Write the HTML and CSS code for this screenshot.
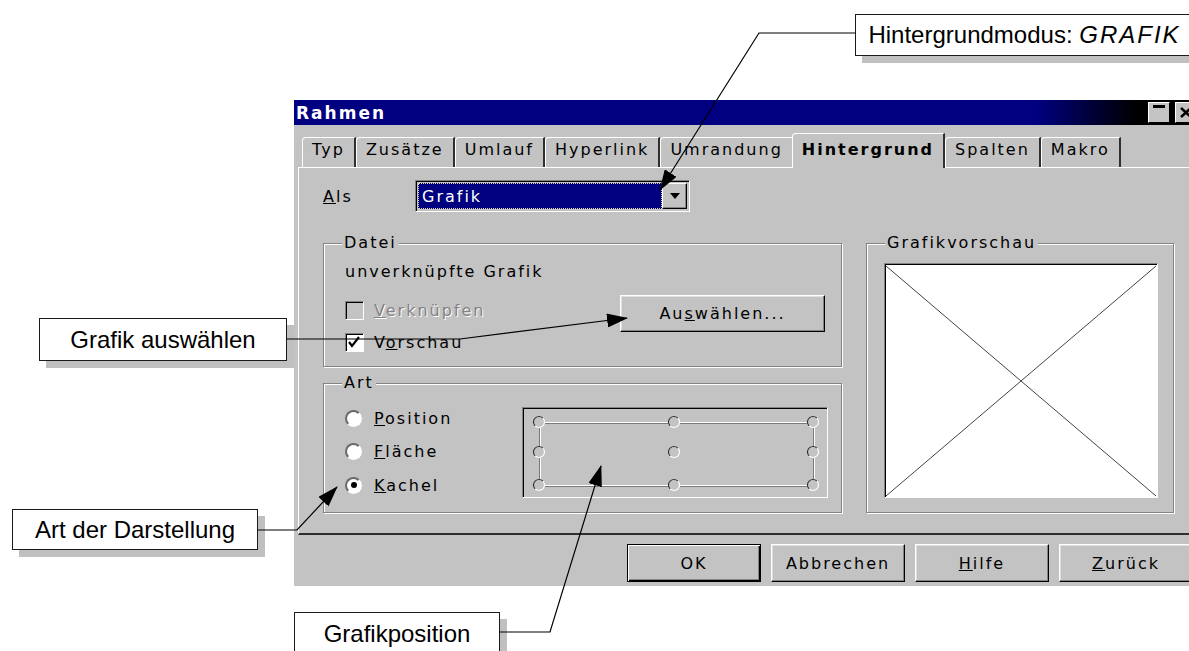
FILE: index.html
```html
<!DOCTYPE html>
<html lang="de">
<head>
    <meta charset="UTF-8">
    <meta name="viewport" content="width=device-width, initial-scale=1.0">
    <title>Rahmen - Hintergrund</title>
    <link rel="stylesheet" href="styles.css">
</head>
<body>
    <div class="dialog">
        <div class="titlebar">
            <span class="title">Rahmen</span>
            <div class="wm-buttons">
                <span class="wm-btn wm-min"></span>
                <span class="wm-btn wm-close">
                    <svg width="20" height="19" viewBox="0 0 20 19"><path d="M5 5 L15 14 M15 5 L5 14" stroke="#000" stroke-width="2.5"/></svg>
                </span>
            </div>
        </div>

        <div class="tabs">
            <div class="tab">Typ</div>
            <div class="tab">Zusätze</div>
            <div class="tab">Umlauf</div>
            <div class="tab">Hyperlink</div>
            <div class="tab before-active">Umrandung</div>
            <div class="tab active">Hintergrund</div>
            <div class="tab">Spalten</div>
            <div class="tab">Makro</div>
        </div>

        <div class="pane">
            <div class="als-row">
                <span class="als-label"><u>A</u>ls</span>
                <div class="combo">
                    <div class="combo-field">Grafik</div>
                    <div class="combo-btn"><span class="down"></span></div>
                </div>
            </div>

            <div class="groups">
                <div class="left-col">
                    <div class="group datei">
                        <span class="legend">Datei</span>
                        <div class="file-name">unverknüpfte Grafik</div>
                        <div class="file-row">
                            <div class="checks">
                                <div class="check disabled"><span class="box"></span><span><u>V</u>erknüpfen</span></div>
                                <div class="check"><span class="box"><svg width="17" height="17" viewBox="0 0 17 17"><polyline points="3,8 6,12 13,3" fill="none" stroke="#000" stroke-width="2.2"/></svg></span><span>V<u>o</u>rschau</span></div>
                            </div>
                            <button class="btn btn-select">Au<u>s</u>wählen...</button>
                        </div>
                    </div>

                    <div class="group art">
                        <span class="legend">Art</span>
                        <div class="radios">
                            <div class="radio-row"><span class="radio"></span><span><u>P</u>osition</span></div>
                            <div class="radio-row"><span class="radio"></span><span><u>F</u>läche</span></div>
                            <div class="radio-row"><span class="radio checked"></span><span><u>K</u>achel</span></div>
                        </div>
                        <div class="pos-widget">
                            <svg width="304" height="89" viewBox="0 0 304 89">
                                <defs>
                                    <g id="handle">
                                        <circle r="5.5" fill="#c3c3c3" stroke="#fff" stroke-width="1.2"/>
                                        <path d="M3.9,-3.9 A5.5,5.5 0 0 0 -3.9,3.9" fill="none" stroke="#2a2a2a" stroke-width="1.2"/>
                                    </g>
                                </defs>
                                <g stroke-width="1">
                                    <line x1="22" y1="14.5" x2="145" y2="14.5" stroke="#fff"/>
                                    <line x1="22" y1="15.5" x2="145" y2="15.5" stroke="#7a7a7a"/>
                                    <line x1="157" y1="14.5" x2="284" y2="14.5" stroke="#fff"/>
                                    <line x1="157" y1="15.5" x2="284" y2="15.5" stroke="#7a7a7a"/>
                                    <line x1="22" y1="77.5" x2="145" y2="77.5" stroke="#fff"/>
                                    <line x1="22" y1="78.5" x2="145" y2="78.5" stroke="#7a7a7a"/>
                                    <line x1="157" y1="77.5" x2="284" y2="77.5" stroke="#fff"/>
                                    <line x1="157" y1="78.5" x2="284" y2="78.5" stroke="#7a7a7a"/>
                                    <line x1="16.5" y1="20" x2="16.5" y2="38" stroke="#7a7a7a"/>
                                    <line x1="17.5" y1="20" x2="17.5" y2="38" stroke="#fff"/>
                                    <line x1="16.5" y1="50" x2="16.5" y2="71" stroke="#7a7a7a"/>
                                    <line x1="17.5" y1="50" x2="17.5" y2="71" stroke="#fff"/>
                                    <line x1="290.5" y1="20" x2="290.5" y2="38" stroke="#7a7a7a"/>
                                    <line x1="291.5" y1="20" x2="291.5" y2="38" stroke="#fff"/>
                                    <line x1="290.5" y1="50" x2="290.5" y2="71" stroke="#7a7a7a"/>
                                    <line x1="291.5" y1="50" x2="291.5" y2="71" stroke="#fff"/>
                                </g>
                                <use href="#handle" x="16" y="14"/>
                                <use href="#handle" x="151" y="14"/>
                                <use href="#handle" x="290" y="14"/>
                                <use href="#handle" x="16" y="44"/>
                                <use href="#handle" x="151" y="44"/>
                                <use href="#handle" x="290" y="44"/>
                                <use href="#handle" x="16" y="77"/>
                                <use href="#handle" x="151" y="77"/>
                                <use href="#handle" x="290" y="77"/>
                            </svg>
                        </div>
                    </div>
                </div>

                <div class="group vorschau">
                    <span class="legend">Grafikvorschau</span>
                    <div class="preview">
                        <svg width="272" height="233" viewBox="0 0 272 233">
                            <line x1="1" y1="2" x2="271" y2="232" stroke="#444"/>
                            <line x1="271" y1="2" x2="1" y2="232" stroke="#444"/>
                        </svg>
                    </div>
                </div>
            </div>
        </div>

        <div class="buttons">
            <button class="btn default">OK</button>
            <button class="btn">Abbrechen</button>
            <button class="btn"><u>H</u>ilfe</button>
            <button class="btn"><u>Z</u>urück</button>
        </div>
    </div>

    <!-- callouts -->
    <div class="callout callout-modus">Hintergrundmodus:&nbsp;<i>GRAFIK</i></div>
    <div class="callout callout-select">Grafik auswählen</div>
    <div class="callout callout-art">Art der Darstellung</div>
    <div class="callout callout-pos">Grafikposition</div>

    <svg class="arrows" width="1189" height="651" viewBox="0 0 1189 651">
        <defs>
            <marker id="head" markerWidth="21" markerHeight="14" refX="20" refY="7" orient="auto" markerUnits="userSpaceOnUse">
                <path d="M0,0 L21,7 L0,14 Z" fill="#000"/>
            </marker>
        </defs>
        <g fill="none" stroke="#000" stroke-width="1.2">
            <polyline points="855,33 759,33 660,190" marker-end="url(#head)"/>
            <polyline points="287,339 460,339 627,318" marker-end="url(#head)"/>
            <polyline points="258,530 297,530 337,487" marker-end="url(#head)"/>
            <polyline points="500,632 550,632 601,466" marker-end="url(#head)"/>
        </g>
    </svg>
</body>
</html>
```

FILE: styles.css
```css
* {
    box-sizing: border-box;
}
html, body {
    margin: 0;
    padding: 0;
}
body {
    position: relative;
    width: 1189px;
    height: 651px;
    overflow: hidden;
    background: #fff;
    font-family: "DejaVu Sans", sans-serif;
}

/* dialog window */
.dialog {
    width: 905px;
    height: 486px;
    margin: 100px 0 0 294px;
    display: flex;
    flex-direction: column;
    background: #c3c3c3;
    color: #000;
    font-size: 16px;
    letter-spacing: 2px;
}
.titlebar {
    height: 25px;
    flex: none;
    display: flex;
    align-items: center;
    justify-content: space-between;
    padding: 0 2px;
    background: linear-gradient(to right, #000080 0%, #000080 82%, #000 93%);
}
.title {
    color: #fff;
    font-weight: bold;
    font-size: 17px;
}
.wm-buttons {
    display: flex;
    gap: 5px;
}
.wm-btn {
    position: relative;
    width: 22px;
    height: 21px;
    background: #c3c3c3;
    border: 1px solid;
    border-color: #fff #000 #000 #fff;
}
.wm-min::before {
    content: "";
    position: absolute;
    left: 4px;
    right: 4px;
    top: 2px;
    height: 3px;
    background: #000;
}
.wm-close svg {
    display: block;
}

/* tabs */
.tabs {
    height: 42px;
    flex: none;
    display: flex;
    align-items: flex-end;
    padding-left: 8px;
}
.tab {
    height: 30px;
    padding: 0 9px 5px;
    line-height: 24px;
    white-space: nowrap;
    border-top: 1px solid #fff;
    border-left: 1px solid #fff;
    border-right: 2px solid #2e2e2e;
    border-top-left-radius: 4px;
}
.tab.before-active {
    border-right: none;
}
.tab.active {
    position: relative;
    z-index: 1;
    height: 35px;
    margin-bottom: -1px;
    padding-top: 4px;
    padding-bottom: 6px;
    font-weight: bold;
    background: #c3c3c3;
}
.pane {
    height: 368px;
    flex: none;
    margin-left: 4px;
    padding: 12px 0 0 24px;
    border-top: 1px solid #fff;
    border-left: 1px solid #fff;
    border-bottom: 2px solid #2e2e2e;
}

/* "Als" combo */
.als-row {
    display: flex;
    align-items: center;
    height: 32px;
}
.als-label {
    width: 92px;
}
.combo {
    width: 275px;
    height: 32px;
    display: flex;
    padding: 2px;
    border: 1px solid;
    border-color: #848284 #fff #fff #848284;
    box-shadow: inset 1px 1px 0 #000;
}
.combo-field {
    flex: 1;
    display: flex;
    align-items: center;
    padding-left: 3px;
    background: #000080;
    color: #fff;
    border: 1px dotted #d8d8a8;
}
.combo-btn {
    width: 25px;
    display: flex;
    align-items: center;
    justify-content: center;
    border: 1px solid;
    border-color: #fff #000 #000 #fff;
    box-shadow: inset -1px -1px 0 #848284;
}
.down {
    width: 0;
    height: 0;
    border-left: 5px solid transparent;
    border-right: 5px solid transparent;
    border-top: 6px solid #000;
}

/* group frames */
.groups {
    margin-top: 31px;
    display: flex;
    gap: 24px;
}
.left-col {
    width: 519px;
    display: flex;
    flex-direction: column;
    gap: 16px;
}
.group {
    position: relative;
    border: 1px solid #848284;
    box-shadow: inset 1px 1px 0 #fff, 1px 1px 0 #fff;
}
.legend {
    position: absolute;
    top: -10px;
    left: 18px;
    padding: 0 2px;
    line-height: 18px;
    background: #c3c3c3;
}
.datei {
    height: 124px;
    padding: 18px 16px 0 21px;
}
.file-name {
    line-height: 20px;
}
.file-row {
    display: flex;
    justify-content: space-between;
    align-items: flex-start;
    margin-top: 18px;
}
.checks {
    display: flex;
    flex-direction: column;
    gap: 12px;
}
.check {
    display: flex;
    align-items: center;
    gap: 10px;
    height: 20px;
}
.box {
    width: 19px;
    height: 19px;
    background: #fff;
    border: 1px solid;
    border-color: #848284 #fff #fff #848284;
    box-shadow: inset 1px 1px 0 #000;
}
.box svg {
    display: block;
}
.check.disabled {
    color: #848284;
    text-shadow: 1px 1px 0 #fff;
}
.check.disabled .box {
    background: #c3c3c3;
}

.art {
    height: 130px;
    padding: 24px 13px 0 21px;
    display: flex;
    justify-content: space-between;
    align-items: flex-start;
}
.radios {
    display: flex;
    flex-direction: column;
    gap: 13.5px;
}
.radio-row {
    display: flex;
    align-items: center;
    gap: 12px;
    height: 20px;
}
.radio {
    position: relative;
    width: 17px;
    height: 17px;
    border-radius: 50%;
    background: #fff;
    border: 2px solid;
    border-color: #6a6a6a #fff #fff #6a6a6a;
}
.radio.checked::after {
    content: "";
    position: absolute;
    left: 3.5px;
    top: 3.5px;
    width: 6px;
    height: 6px;
    border-radius: 50%;
    background: #000;
}
.pos-widget {
    width: 306px;
    height: 91px;
    margin-top: -1px;
    border: 1px solid;
    border-color: #848284 #fff #fff #848284;
    box-shadow: inset 1px 1px 0 #000;
}
.pos-widget svg {
    display: block;
}

.vorschau {
    width: 308px;
    height: 270px;
    padding: 19px 0 0 17px;
}
.preview {
    width: 274px;
    height: 235px;
    background: #fff;
    border: 1px solid;
    border-color: #848284 #fff #fff #848284;
    box-shadow: inset 1px 1px 0 #000;
}
.preview svg {
    display: block;
}

/* push buttons */
.buttons {
    display: flex;
    justify-content: flex-end;
    gap: 10px;
    padding: 9px 6px 0 0;
}
.btn {
    width: 134px;
    height: 38px;
    padding: 0;
    font: inherit;
    letter-spacing: inherit;
    color: #000;
    background: #c3c3c3;
    border: 1px solid;
    border-color: #fff #000 #000 #fff;
    box-shadow: inset -1px -1px 0 #848284, inset 1px 1px 0 #dfdfdf;
}
.btn.default {
    border-color: #000;
    box-shadow: inset 1px 1px 0 #fff, inset -1px -1px 0 #000, inset -2px -2px 0 #848284;
}
.btn-select {
    width: 205px;
    height: 37px;
    margin-top: -5px;
}

/* annotation callouts */
.callout {
    position: absolute;
    display: flex;
    align-items: center;
    justify-content: center;
    background: #fff;
    border: 1px solid #1a1a1a;
    box-shadow: 7px 7px 0 #c0c0c0;
    font-family: "Liberation Sans", Arial, sans-serif;
    font-size: 24px;
    color: #000;
    white-space: nowrap;
}
.callout-modus {
    left: 855px;
    top: 14px;
    width: 339px;
    height: 42px;
}
.callout-modus i {
    letter-spacing: 2px;
}
.callout-select {
    left: 39px;
    top: 318px;
    width: 248px;
    height: 43px;
}
.callout-art {
    left: 12px;
    top: 509px;
    width: 246px;
    height: 41px;
}
.callout-pos {
    left: 294px;
    top: 612px;
    width: 206px;
    height: 44px;
}
.arrows {
    position: absolute;
    left: 0;
    top: 0;
    pointer-events: none;
}
```
